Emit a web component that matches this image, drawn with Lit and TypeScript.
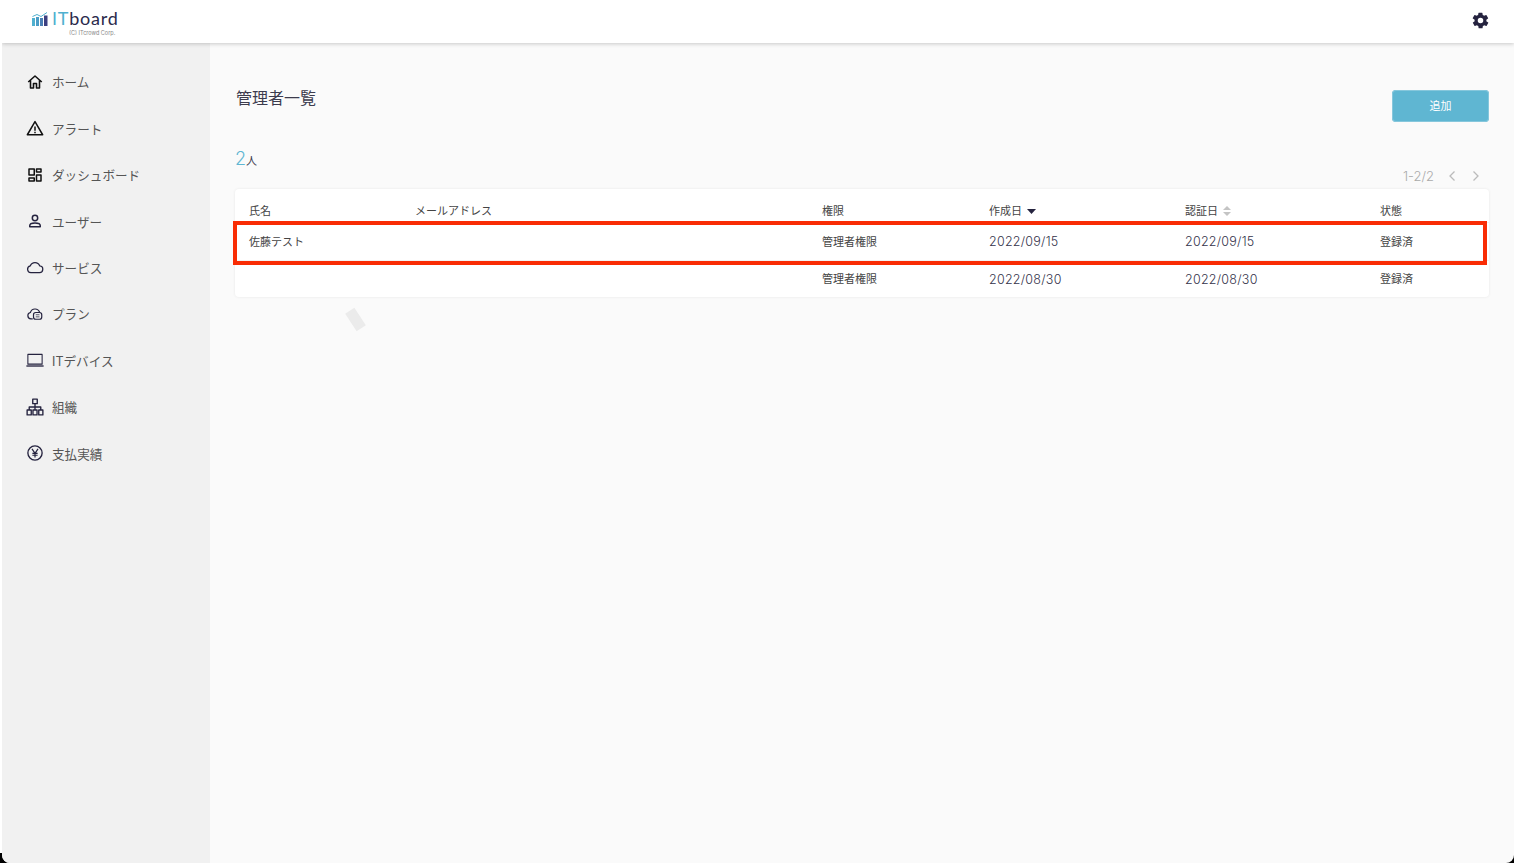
import { LitElement, html, css, svg } from "lit";
import { customElement } from "lit/decorators.js";

const ic = (body: unknown, size = 18) => html`<svg class="ic" width=${size} height=${size} viewBox="0 0 24 24" fill="none" stroke="#25233f" stroke-width="2" stroke-linejoin="round">${body}</svg>`;

const nav = [
  ["ホーム", svg`<path d="M3 12 12 4l9 8M6 10v10h4v-6h4v6h4V10" stroke-width="2.1" stroke="#111"/>`],
  ["アラート", svg`<path d="M12 3.5 1.8 21h20.4z" stroke="#111"/><path d="M12 10v5.5M12 17v2" stroke="#111"/>`],
  ["ダッシュボード", svg`<path d="M4 4h7v8H4zM14 4h6v4h-6zM14 12h6v8h-6zM4 16h7v4H4z" stroke="#111" stroke-width="2"/>`],
  ["ユーザー", svg`<circle cx="12" cy="8" r="3.6"/><path d="M5 19.5v-1.2c0-2.3 3.4-3.6 7-3.6s7 1.3 7 3.6v1.2z"/>`],
  ["サービス", svg`<path d="M6.5 19.5a4.6 4.6 0 0 1-.7-9.1 6.6 6.6 0 0 1 12.4.1 4.5 4.5 0 0 1-.7 9z" stroke-width="1.7"/>`],
  ["プラン", svg`<path d="M9 18.5H6.5a4.3 4.3 0 0 1-.6-8.5 6.4 6.4 0 0 1 12.2-.4" stroke-width="1.6"/><rect x="10" y="10" width="11" height="9" rx="3" stroke-width="1.6"/><path d="M13 13h5M13 15.8h5" stroke-width="1"/>`],
  ["ITデバイス", svg`<path d="M2.5 4.500h19v13h-19z" stroke-width="1.400"/><path d="M.5 20h23" stroke-width="1.800"/>`],
  ["組織", svg`<path d="M9 1.500h6v6H9zM1.500 16H7v6.500H1.500zM9.300 16h5.400v6.500H9.300zM17 16h5.500v6.500H17zM12 7.500V16M4.300 16v-4h15.400v4" stroke-width="1.800"/>`],
  ["支払実績", svg`<circle cx="12" cy="12" r="9.500" stroke-width="1.800"/><path d="m8 6.500 4 6 4-6M12 12.500V18M8.500 12.500h7M8.500 15h7" stroke-width="1.600"/>`],
] as const;

const cols = ["氏名", "メールアドレス", "権限", "作成日", "認証日", "状態"];
const rows = [
  ["佐藤テスト", "", "管理者権限", "2022/09/15", "2022/09/15", "登録済"],
  ["", "", "管理者権限", "2022/08/30", "2022/08/30", "登録済"],
];

@customElement("app-root")
export class AppRoot extends LitElement {
  static styles = css`
    :host { display: block; width: 1514px; height: 863px; background: #fff; overflow: hidden;
      font-family: Inter, "Noto Sans CJK JP", sans-serif; color: #3c3b4d; }
    .outer { height: 863px; background: linear-gradient(#fff 853px, #000 853px); }
    .frame { height: 863px; margin-left: 2px; display: flex; flex-direction: column; background: #fafafa;
      border-radius: 0 0 8px 8px; overflow: hidden; position: relative; }
    header { height: 43px; flex: none; box-sizing: border-box; background: #fff; display: flex; align-items: center; justify-content: space-between;
      padding: 0 24px 2px 30px; box-shadow: 0 1px 4px rgba(0,0,0,.2); position: relative; z-index: 1; }
    .logo { display: flex; flex-direction: column; align-items: flex-start; }
    .logo-top { display: flex; align-items: center; gap: 4px; height: 17px; margin-top: 5px; }
    .wordmark { font: 400 18px/17px Lato, sans-serif; color: #2b2a4c; letter-spacing: .8px; }
    .wordmark b { font-weight: 400; color: #4fb0cf; }
    .copy { font-size: 5.500px; line-height: 6px; color: #888; margin: 3px 0 0 37px; white-space: nowrap; }
    .body { flex: 1; display: flex; min-height: 0; }
    aside { width: 208px; flex: none; background: #f1f1f1; padding-top: 15.700px; }
    .nav { height: 46.400px; display: flex; align-items: center; padding-left: 24px; gap: 8px; font-size: 12.600px; color: #555; }
    .ic { flex: none; display: block; }
    main { flex: 1; padding: 44px 25px 0 25px; position: relative; min-width: 0; }
    .top { display: flex; justify-content: space-between; align-items: flex-start; height: 58px; }
    h1 { margin: 0 0 0 1px; font-size: 16px; font-weight: 400; line-height: 22px; color: #3c3b4d; }
    button { width: 97px; height: 32px; margin-top: 3px; padding: 0 0 2px; border: 0; border-radius: 4px; background: #5fb6d2; color: #fff;
      font: 400 11px Inter, "Noto Sans CJK JP", sans-serif; box-shadow: 0 0 0 1px #86c7dc inset; }
    .count { height: 44px; box-sizing: border-box; padding-top: 4px; display: flex; justify-content: space-between; align-items: flex-start; }
    .num { font-size: 11px; line-height: 20px; color: #3c3b4d; }
    .num b { font-size: 18px; font-weight: 300; color: #5fb6d2; }
    .pager { display: flex; align-items: center; font-size: 13px; line-height: 14px; color: #aaa; margin-top: 20px; padding-right: 9px; font-weight: 300; }
    .pager svg { margin-left: 14px; }
    .pager svg + svg { margin-left: 16px; }
    .card { background: #fff; border-radius: 4px; box-shadow: 0 0 3px rgba(0,0,0,.08); }
    .row { display: grid; grid-template-columns: 166px 407px 167px 196px 195px 1fr; padding-left: 14px; align-items: center; box-sizing: border-box;
      font-size: 11px; height: 37px; border-top: 1px solid #f2f2f2; color: #444; }
    .row.head { height: 33px; border-top: 0; padding-top: 9px; color: #444; }
    .row.first { height: 38px; }
    .cell { margin-bottom: 2px; }
    .date { font-size: 12.500px; font-weight: 300; letter-spacing: .25px; color: #33324a; }
    .sort { display: inline-block; vertical-align: 1px; margin-left: 5px; }
    .sort.both { vertical-align: -1px; }
    .hl { position: absolute; left: 231px; top: 221px; width: 1254px; height: 44px; box-sizing: border-box; border: 4px solid #f92c04; }
    .mark { position: absolute; left: 348px; top: 309px; width: 11px; height: 21px; background: #ebebeb; transform: rotate(-33deg); }
  `;

  render() {
    return html`<div class="outer"><div class="frame">
      <header>
        <div class="logo">
          <div class="logo-top">
            <svg width="16" height="14" viewBox="0 0 16 14">
              <path d="M0 14V6h3v8z" fill="#4fb0cf"/><path d="M4 14V5h3v9z" fill="#4a9cc6"/><path d="M8 14V6h3v8z" fill="#4a7fb5"/><path d="M12 14V3.500h3.500V14z" fill="#3c3f80"/>
              <path d="M.5 4.500 5 2.500l4 2 6-4" fill="none" stroke="#4fb0cf"/>
            </svg>
            <span class="wordmark"><b>IT</b>board</span>
          </div>
          <span class="copy">(C) ITcrowd Corp.</span>
        </div>
        <svg width="19" height="19" viewBox="0 0 24 24" fill="#25233f"><path d="M19.400 13a7.500 7.500 0 0 0 0-2l2.100-1.600a.5.5 0 0 0 .1-.6l-2-3.500a.5.5 0 0 0-.6-.2l-2.500 1a7.300 7.300 0 0 0-1.700-1l-.4-2.600a.5.5 0 0 0-.5-.4h-4a.5.500 0 0 0-.5.400l-.4 2.600a7.300 7.300 0 0 0-1.700 1l-2.500-1a.5.500 0 0 0-.6.200l-2 3.500a.5.500 0 0 0 .1.600L4.600 11a7.500 7.500 0 0 0 0 2l-2.100 1.600a.5.500 0 0 0-.1.600l2 3.500c.1.200.4.300.6.200l2.500-1c.5.400 1.100.7 1.700 1l.4 2.600c0 .2.200.4.500.4h4c.3 0 .5-.2.500-.4l.4-2.600a7.300 7.300 0 0 0 1.700-1l2.500 1c.2.100.5 0 .6-.2l2-3.500a.5.500 0 0 0-.1-.6zM12 15.500a3.500 3.500 0 1 1 0-7 3.500 3.500 0 0 1 0 7z"/></svg>
      </header>
      <div class="body">
        <aside>${nav.map(([label, body]) => html`<div class="nav">${ic(body)}<span>${label}</span></div>`)}</aside>
        <main>
          <div class="top"><h1>管理者一覧</h1><button>追加</button></div>
          <div class="count">
            <div class="num"><b>2</b>人</div>
            <div class="pager"><span>1-2/2</span>
              <svg width="8" height="12" viewBox="0 0 8 12" fill="none" stroke="#bbb" stroke-width="1.300"><path d="M6.500 1.500 2 6l4.500 4.500"/></svg>
              <svg width="8" height="12" viewBox="0 0 8 12" fill="none" stroke="#bbb" stroke-width="1.300"><path d="M1.500 1.500 6 6l-4.500 4.500"/></svg>
            </div>
          </div>
          <div class="card">
            <div class="row head">
              ${cols.map((c, i) => html`<div>${c}${i === 3 ? html`<svg class="sort" width="9" height="5" viewBox="0 0 9 5"><path d="M0 0h9L4.500 5z" fill="#25233f"/></svg>` : ""}${i === 4 ? html`<svg class="sort both" width="8" height="10" viewBox="0 0 8 10"><path d="M0 4h8L4 0zM0 6h8L4 10z" fill="#c4c4c4"/></svg>` : ""}</div>`)}
            </div>
            ${rows.map((r, ri) => html`<div class="row ${ri === 0 ? "first" : ""}">
              ${r.map((v, i) => html`<div class="${i === 3 || i === 4 ? "date" : "cell"}">${v}</div>`)}
            </div>`)}
          </div>
        </main>
      </div>
      <div class="hl"></div>
      <div class="mark"></div>
    </div></div>`;
  }
}
